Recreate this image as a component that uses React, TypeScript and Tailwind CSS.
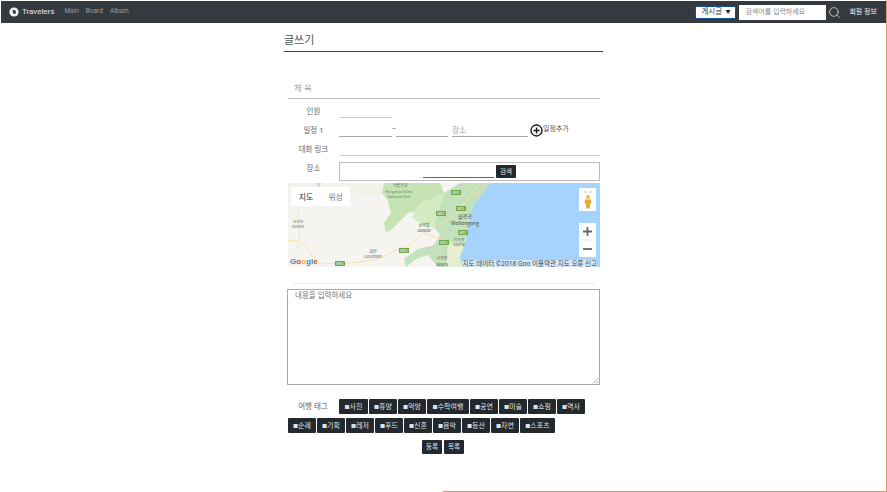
import { Search } from "lucide-react";

const font = { fontFamily: '"Noto Sans", "Noto Sans CJK KR", sans-serif' };

const tagsTop = [
  { name: "사진", w: "w-[29px]" },
  { name: "휴양", w: "w-[28px]" },
  { name: "먹방", w: "w-[28px]" },
  { name: "수학여행", w: "w-[42px]" },
  { name: "공연", w: "w-[28px]" },
  { name: "미술", w: "w-[28px]" },
  { name: "쇼핑", w: "w-[28px]" },
  { name: "역사", w: "w-[28px]" },
];

const tagsBottom = [
  { name: "순례", w: "w-[28px]" },
  { name: "기획", w: "w-[28px]" },
  { name: "레저", w: "w-[28px]" },
  { name: "푸드", w: "w-[28px]" },
  { name: "신혼", w: "w-[28px]" },
  { name: "음악", w: "w-[28px]" },
  { name: "등산", w: "w-[28px]" },
  { name: "자연", w: "w-[28px]" },
  { name: "스포츠", w: "w-[35px]" },
];

const Tag = ({ name, w }: { name: string; w: string }) => (
  <button className={`${w} h-[15px] shrink-0 rounded-[1px] bg-[#23292e] text-[7px] leading-[15px] text-[#dfe2e4] text-center whitespace-nowrap`}>
    <span className="text-[5px] align-[1px]">■</span>
    {name}
  </button>
);

const Label = ({ children }: { children: string }) => (
  <p className="w-[51px] shrink-0 text-center text-[7.5px] leading-[10px] text-[#666]">{children}</p>
);

const MapBadge = ({ x, y }: { x: number; y: number }) => (
  <g>
    <rect x={x} y={y} width="10" height="5" fill="#6fa84f" />
    <text x={x + 1.2} y={y + 4} fontSize="3.8" fill="#fff" fontFamily="Liberation Sans">M31</text>
  </g>
);

const MapDrawing = () => (
  <svg viewBox="0 0 312 84" className="block w-full h-full">
    <defs>
      <filter id="soft">
        <feGaussianBlur stdDeviation="0.7" />
      </filter>
    </defs>
    <rect width="312" height="84" fill="#f5f4f0" />
    <g filter="url(#soft)">
      <path d="M0 0 H95 L92 14 L70 10 L40 14 L0 10 Z" fill="#f1f3e8" />
      <path d="M28 0 L33 0 L31 6 Z" fill="#bcdcf5" />
      <path d="M96 0 L152 0 L156 10 L150 18 L144 30 L132 28 L120 30 L112 38 L104 46 L98 50 L96 40 L103 30 L100 18 L94 10 Z" fill="#c6e3b4" />
      <path d="M156 10 L172 0 L203 0 L195 10 L185 22 L182 33 L180 47 L177 61 L172 74 L174 84 L150 84 L140 72 L128 76 L118 84 L116 76 L130 66 L146 62 L152 52 L146 44 L150 30 Z" fill="#c3e2bc" />
      <path d="M132 20 L156 10 L150 30 L146 44 L136 44 L124 34 Z" fill="#d4ebc4" />
      <path d="M160 60 L176 60 L172 74 L174 84 L158 84 Z" fill="#e6efd2" />
    </g>
    <path d="M203 0 L312 0 L312 84 L174 84 L172 74 L177 61 L180 47 L182 33 L185 22 L195 10 Z" fill="#a5d3fb" />
    <path d="M0 58 C8 56 16 60 22 70 L34 84 M34 80 C60 82 78 78 88 76 C100 72 108 66 118 64 C126 60 130 54 136 50 C146 54 160 58 172 66 M136 50 C150 42 160 38 170 30 C176 20 184 10 192 0" fill="none" stroke="#f7e2a0" strokeWidth="1" />
    <path d="M10 26 L12 50 L9 66 M198 2 L186 14" fill="none" stroke="#ecdcc0" strokeWidth="0.7" />
    <MapBadge x={163} y={7} />
    <MapBadge x={148} y={28} />
    <MapBadge x={168} y={23} />
    <MapBadge x={170} y={47} />
    <MapBadge x={151} y={57} />
    <MapBadge x={111} y={65} />
    <MapBadge x={47} y={78} />
    <g fontFamily="Noto Sans CJK KR, sans-serif" textAnchor="middle">
      <text x="112" y="4" fontSize="4" fill="#4d7a55">국립공원</text>
      <text x="111" y="10" fontSize="3.6" fill="#5a8a62">Kangaroo Valley</text>
      <text x="111" y="15" fontSize="3.6" fill="#5a8a62">National Park</text>
      <text x="10" y="40" fontSize="3.8" fill="#777">보로와</text>
      <text x="10" y="45" fontSize="3.8" fill="#777">Bowral</text>
      <text x="85" y="70" fontSize="4" fill="#666">굴번</text>
      <text x="85" y="75" fontSize="4" fill="#666">Goulburn</text>
      <text x="136" y="44" fontSize="4" fill="#555">보우랄</text>
      <text x="136" y="49" fontSize="4" fill="#555">Bowral</text>
      <text x="177" y="35" fontSize="5" fill="#444">월런공</text>
      <text x="177" y="42" fontSize="5" fill="#444">Wollongong</text>
      <text x="171" y="58" fontSize="3.8" fill="#666">키아마</text>
      <text x="171" y="63" fontSize="3.8" fill="#666">Kiama</text>
      <text x="154" y="77" fontSize="4" fill="#555">나우라</text>
      <text x="154" y="83" fontSize="4" fill="#555">Nowra</text>
    </g>
  </svg>
);

export default function App() {
  return (
    <div className="relative h-[492px] w-[887px] overflow-hidden bg-white" style={font}>
      <nav className="mt-px ml-px flex h-[22px] items-center justify-between bg-[#343a40] pl-[8px] pr-[10px]">
        <div className="flex items-center">
          <svg width="10" height="10" viewBox="0 0 10 10">
            <circle cx="5" cy="5" r="4.6" fill="#f2f3f3" />
            <path d="M3.2 3 L6.6 3.6 L7 6.6 L4.6 7 Z" fill="#343a40" />
          </svg>
          <span className="ml-[3px] text-[8px] text-[#e9ecef]" style={{ fontFamily: "Roboto, sans-serif" }}>Travelers</span>
          <div className="ml-[10px] flex gap-[7px] text-[6.5px] text-[#9a9da1]" style={{ fontFamily: "Roboto, sans-serif" }}>
            <a>Main</a>
            <a>Board</a>
            <a>Album</a>
          </div>
        </div>
        <div className="flex items-center">
          <div className="flex h-[13px] w-[41px] items-center justify-between border border-[#17508f] bg-white px-[5px] text-[7.5px] text-[#444]">
            <span>게시글</span>
            <span className="text-[5px] text-[#222]">▼</span>
          </div>
          <div className="ml-[3px] flex h-[15px] w-[87px] items-center bg-white pl-[6px] text-[7px] text-[#888]">
            검색어를 입력하세요
          </div>
          <Search size={13} strokeWidth={1.5} className="ml-[2px] text-[#d8dadb]" />
          <span className="ml-[8px] text-[7px] text-[#f0f1f2]">회원 정보</span>
        </div>
      </nav>

      <main className="mx-auto w-[319px]">
        <h2 className="h-[29px] border-b border-[#444] pt-[9px] text-[11px] leading-[16px] text-[#555]">글쓰기</h2>

        <div className="ml-[4px] w-[312px]">
          <div className="mt-[28px] h-[19px] border-b border-[#bbb] pl-[6px] text-[8.5px] leading-[16px] font-light text-[#777]">제 목</div>

          <div className="mt-[7px] flex h-[12px] items-start">
            <Label>인원</Label>
            <div className="h-[12px] w-[53px] border-b border-[#ccc]" />
          </div>

          <div className="mt-[7px] flex h-[12px] items-start">
            <Label>일정 1</Label>
            <div className="h-[12px] w-[53px] border-b border-[#aaa]" />
            <span className="w-[4px] text-[7px] leading-[8px] text-[#666]">~</span>
            <div className="h-[12px] w-[52px] border-b border-[#aaa]" />
            <div className="ml-[4px] h-[12px] w-[76px] border-b border-[#aaa] text-[7.5px] leading-[10px] text-[#999]">장소</div>
            <svg width="13" height="13" viewBox="0 0 13 13" className="ml-[2px] -mt-[1px] shrink-0">
              <circle cx="6.5" cy="6.5" r="5.5" fill="none" stroke="#111" strokeWidth="1.3" />
              <path d="M6.5 3.5 V9.5 M3.5 6.5 H9.5" stroke="#111" strokeWidth="1.3" />
            </svg>
            <span className="text-[7px] leading-[8px] text-[#555] whitespace-nowrap">일정추가</span>
          </div>

          <div className="mt-[7px] flex h-[12px] items-start">
            <Label>대화 링크</Label>
            <div className="h-[12px] w-[261px] border-b border-[#ccc]" />
          </div>

          <div className="mt-[6px] flex h-[19px] items-start">
            <div className="pt-px">
              <Label>장소</Label>
            </div>
            <div className="flex h-[19px] w-[261px] items-start border border-[#bbb] pl-[83px]">
              <div className="h-[15px] w-[71px] border-b border-[#666]" />
              <button className="mt-[2px] ml-[2px] h-[13px] w-[20px] rounded-[1px] bg-[#23292e] text-[6.5px] leading-[13px] text-[#dfe2e4]">검색</button>
            </div>
          </div>

          <div className="relative mt-[2px] h-[84px] w-[312px]">
            <MapDrawing />
            <div className="absolute left-[3px] top-[4px] flex h-[19px] w-[59px] bg-white text-[8px] leading-[19px]">
              <span className="w-[30px] text-center text-[#333]">지도</span>
              <span className="w-[29px] text-center text-[#777]">위성</span>
            </div>
            <div className="absolute left-[291px] top-[5px] flex h-[23px] w-[17px] flex-col items-center bg-white pt-[2px]">
              <svg width="8" height="19" viewBox="0 0 8 19">
                <path d="M0.5 2 H2.5 M5.5 2 H7.5" stroke="#999" strokeWidth="0.8" />
                <circle cx="4" cy="7" r="1.9" fill="#e9b23d" />
                <path d="M1 9.5 H7 L7.5 13.5 H6.2 L5.6 18.5 H2.4 L1.8 13.5 H0.5 Z" fill="#e5a92f" />
              </svg>
            </div>
            <div className="absolute left-[291px] top-[40px] flex h-[34px] w-[17px] flex-col bg-white">
              <svg width="17" height="34" viewBox="0 0 17 34">
                <path d="M4 8.5 H13 M8.5 4 V13" stroke="#666" strokeWidth="1.8" />
                <path d="M3 17 H14" stroke="#e6e6e6" strokeWidth="0.8" />
                <path d="M4 26 H13" stroke="#666" strokeWidth="1.8" />
              </svg>
            </div>
            <p className="absolute bottom-0 right-[3px] h-[7px] w-[135px] bg-white/50 text-right text-[6.5px] leading-[7px] text-[#444] whitespace-nowrap">
              지도 데이터 ©2018 Goo 이용약관 지도 오류 신고
            </p>
            <p className="absolute bottom-0 left-[2px] text-[8px] font-bold leading-[11px]" style={{ fontFamily: '"Liberation Sans", sans-serif' }}>
              <span className="text-[#4285f4]">G</span>
              <span className="text-[#ea4335]">o</span>
              <span className="text-[#fbbc05]">o</span>
              <span className="text-[#4285f4]">g</span>
              <span className="text-[#34a853]">l</span>
              <span className="text-[#ea4335]">e</span>
            </p>
          </div>

          <div className="mx-[5px] mt-[16px] h-px w-[302px] bg-[#eee]" />

          <div className="relative mt-[5px] -ml-px h-[96px] w-[313px] border border-[#aaa] pl-[7px] text-[7.5px] leading-[11px] text-[#777]">
            내용을 입력하세요
            <svg width="7" height="7" viewBox="0 0 7 7" className="absolute bottom-0 right-0">
              <path d="M1 6.5 L6.5 1 M4 6.5 L6.5 4" stroke="#888" strokeWidth="0.7" />
            </svg>
          </div>

          <div className="mt-[14px] flex items-center gap-px">
            <p className="w-[50px] shrink-0 text-center text-[7.5px] text-[#666]">여행 태그</p>
            {tagsTop.map((t) => (
              <Tag key={t.name} name={t.name} w={t.w} />
            ))}
          </div>

          <div className="mt-[4px] flex gap-px">
            {tagsBottom.map((t) => (
              <Tag key={t.name} name={t.name} w={t.w} />
            ))}
          </div>

          <div className="mt-[7px] flex justify-center gap-[2px] pr-[2px]">
            <button className="h-[14px] w-[20px] rounded-[1px] bg-[#23292e] text-[6.5px] leading-[14px] text-[#dfe2e4]">등록</button>
            <button className="h-[14px] w-[20px] rounded-[1px] bg-[#23292e] text-[6.5px] leading-[14px] text-[#dfe2e4]">목록</button>
          </div>
        </div>
      </main>

      <div className="absolute bottom-0 left-[443px] right-0 h-px bg-[#c9a46f]" />
      <div className="absolute bottom-0 right-0 top-0 w-px bg-[#c9a46f]" />
    </div>
  );
}
